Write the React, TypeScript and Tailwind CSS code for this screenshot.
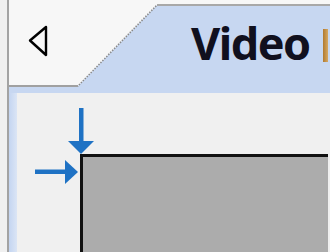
export default function App() {
  return (
    <div className="w-[330px] h-[252px] overflow-hidden bg-[#f0f0f0] flex font-['Noto_Sans',sans-serif]">
      {/* outer frame edge */}
      <div className="w-[7px] shrink-0 bg-[#f0f0f0]" />
      <div className="w-[2px] shrink-0 bg-[#a3a3a3]" />

      <div className="flex-1 flex flex-col min-w-0">
        {/* tab strip */}
        <div className="h-[87px] flex shrink-0">
          <div className="w-[68px] shrink-0 bg-[#f7f7f7] border-b-2 border-[#a0a0a0] pl-[19px] pt-[25px]">
            <svg width="21" height="32" viewBox="0 0 21 32">
              <path d="M18 2 L2 15.5 L18 30 Z" fill="none" stroke="#000" strokeWidth="2.4" strokeLinejoin="round" />
            </svg>
          </div>
          <svg width="80" height="87" viewBox="0 0 80 87" className="shrink-0">
            <rect width="80" height="87" fill="#f7f7f7" />
            <polygon points="0,87 80,5 80,87" fill="#c7d7f1" />
            <line x1="0" y1="87" x2="80" y2="5" stroke="#8a8a8a" strokeWidth="1.6" strokeDasharray="1.4 1.4" />
            <line x1="0" y1="86" x2="1" y2="86" stroke="#a0a0a0" strokeWidth="2" />
          </svg>
          <div className="flex-1 flex flex-col bg-[#f7f7f7] min-w-0">
            <div className="h-[4px] shrink-0" />
            <div className="flex-1 bg-[#c7d7f1] border-t-2 border-[#a8a8a8] flex items-start pl-[34px] pt-[11px] gap-[13px]">
              <span className="text-[45px] leading-[52px] font-bold text-[#10101e] tracking-[-1.5px]">Video</span>
              <div className="w-[5px] h-[33px] mt-[12px] shrink-0 bg-gradient-to-r from-[#b07a30] to-[#d6a862]" />
            </div>
          </div>
        </div>

        {/* selected tab page frame */}
        <div className="h-[6px] shrink-0 bg-[#c7d7f1]" />
        <div className="flex-1 flex min-h-0">
          <div className="w-[8px] shrink-0 bg-gradient-to-r from-[#c4d5f1] to-[#dbe5f5]" />
          <div className="relative flex-1 flex flex-col pl-[63px] pt-[61px] pr-[2px] bg-[#f0f0f0]">
            {/* guide arrows */}
            <svg width="26" height="46" viewBox="0 0 26 46" className="absolute left-[51px] top-[15px]">
              <rect x="11" y="0" width="4.5" height="35" fill="#1f72c4" />
              <polygon points="0,33 26,33 13,46" fill="#1f72c4" />
            </svg>
            <svg width="44" height="24" viewBox="0 0 44 24" className="absolute left-[18px] top-[67px]">
              <rect x="0" y="9.5" width="32" height="4.5" fill="#1f72c4" />
              <polygon points="30,0 30,24 43,12" fill="#1f72c4" />
            </svg>
            <div className="flex-1 border-t-[3px] border-l-[3px] border-[#111] bg-[#acacac]" />
          </div>
        </div>
      </div>
    </div>
  );
}
